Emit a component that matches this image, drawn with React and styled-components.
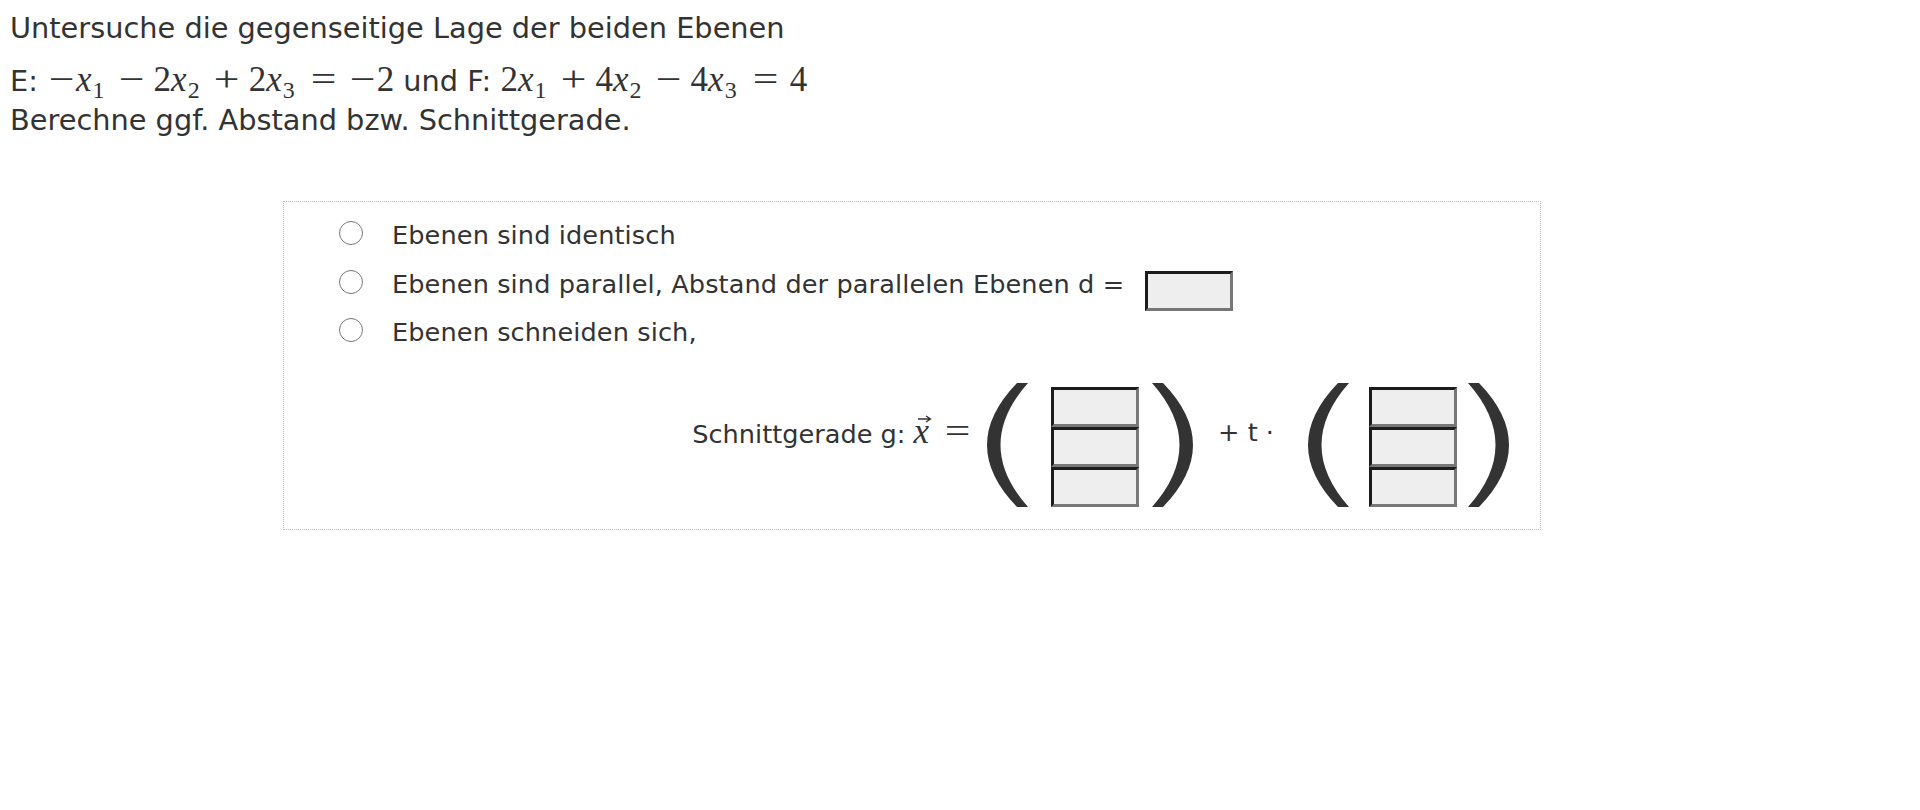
import React from "react";
import styled, { createGlobalStyle } from "styled-components";

const GlobalStyle = createGlobalStyle`
  body {
    margin: 0;
    background: #fff;
    color: #333;
    font-family: "DejaVu Sans", Verdana, sans-serif;
    font-size: 25.6px;
  }
`;

const Page = styled.div`
  padding: 8px 10px;
`;

const Intro = styled.p`
  margin: 0 0 12px;
  font-size: 28.8px;
  line-height: 40px;
`;

const Task = styled.p`
  margin: 0;
  font-size: 28.8px;
  line-height: 39px;
`;

const M = styled.span`
  font-family: "Liberation Serif", "Times New Roman", serif;
  font-size: 35px;
  font-style: ${(p) => (p.$it ? "italic" : "normal")};
  padding-right: ${(p) => (p.$it ? 2 : 0)}px;
`;

const Op = styled.span`
  display: inline-block;
  width: 29px;
  text-align: center;
  font-family: "Liberation Serif", "Times New Roman", serif;
  font-size: 35px;
  line-height: 1;
  margin: 0 ${(p) => (p.$unary ? 0 : p.$rel ? 10 : 8)}px;
  transform: scaleX(1.3);
`;

const Sub = styled.sub`
  font-family: "Liberation Serif", serif;
  font-size: 24px;
  font-style: normal;
  line-height: 0;
  vertical-align: -7px;
  margin-left: -1px;
  padding-right: 4px;
`;

const Box = styled.div`
  box-sizing: border-box;
  margin: 61px 0 0 273px;
  width: 1258px;
  height: 329px;
  border: 1px dotted #bbb;
  padding: 9px 29px 0 55px;
  letter-spacing: 0.1px;
`;

const Option = styled.label`
  display: flex;
  align-items: center;
  height: ${(p) => p.$h || 40}px;
`;

const Radio = styled.span`
  box-sizing: border-box;
  width: 24px;
  height: 24px;
  border: 1.6px solid #777;
  border-radius: 50%;
  margin-right: 29px;
  flex-shrink: 0;
  position: relative;
  top: -2px;
`;

const Field = styled.span`
  display: block;
  box-sizing: border-box;
  width: 88px;
  height: 40px;
  background: #eee;
  border: 3.5px solid;
  border-color: #1c1c1c #777 #777 #1c1c1c;
`;

const DField = styled(Field)`
  margin-left: 21px;
  margin-top: 14px;
`;

const Line = styled.div`
  display: flex;
  align-items: center;
  justify-content: flex-end;
  margin-top: 28px;
  letter-spacing: 0;
`;

const Label = styled.span`
  padding-bottom: 26px;
  margin: ${(p) => p.$m || "0"};
  white-space: nowrap;
`;

const Vec = styled.span`
  position: relative;
  display: inline-block;
  font-family: "Liberation Serif", serif;
  font-style: italic;
  font-size: 35px;
  padding-right: 4px;
  svg {
    position: absolute;
    left: 4px;
    top: 3px;
  }
`;

const Matrix = styled.div`
  display: flex;
  align-items: flex-end;
`;

const Stack = styled.div`
  display: flex;
  flex-direction: column;
  margin: ${(p) => p.$m};
`;

const Paren = ({ right }) => (
  <svg width="43" height="124" viewBox="0 0 43 124">
    <path
      d="M32 0 Q-28 62 32 124 L43 124 Q-12 62 43 0 Z"
      fill="#333"
      transform={right ? "translate(43 0) scale(-1 1)" : undefined}
    />
  </svg>
);

const Column = ({ m }) => (
  <Matrix>
    <Paren />
    <Stack $m={m}>
      <Field />
      <Field />
      <Field />
    </Stack>
    <Paren right />
  </Matrix>
);

const X = ({ n }) => (
  <>
    <M $it>x</M>
    <Sub>{n}</Sub>
  </>
);

export default function App() {
  return (
    <Page>
      <GlobalStyle />
      <Intro>Untersuche die gegenseitige Lage der beiden Ebenen</Intro>
      <Task>
        E: <Op $unary>−</Op>
        <X n="1" />
        <Op>−</Op>
        <M>2</M>
        <X n="2" />
        <Op>+</Op>
        <M>2</M>
        <X n="3" />
        <Op $rel>=</Op>
        <Op $unary>−</Op>
        <M>2</M> und F: <M>2</M>
        <X n="1" />
        <Op>+</Op>
        <M>4</M>
        <X n="2" />
        <Op>−</Op>
        <M>4</M>
        <X n="3" />
        <Op $rel>=</Op>
        <M>4</M>
        <br />
        Berechne ggf. Abstand bzw. Schnittgerade.
      </Task>
      <Box>
        <Option $h={48}>
          <Radio />
          Ebenen sind identisch
        </Option>
        <Option $h={50}>
          <Radio />
          Ebenen sind parallel, Abstand der parallelen Ebenen d =
          <DField />
        </Option>
        <Option $h={46}>
          <Radio />
          Ebenen schneiden sich,
        </Option>
        <Line>
          <Label $m="0 3px 0 0">
            Schnittgerade g:{" "}
            <Vec>
              x
              <svg width="14" height="8" viewBox="0 0 14 8">
                <path d="M0 4 H12 M8 1 L12.5 4 L8 7" stroke="#333" strokeWidth="1.4" fill="none" />
              </svg>
            </Vec>
            <Op $rel>=</Op>
          </Label>
          <Column m="0 13px 0 23px" />
          <Label $m="0 32px 0 23px">+ t ·</Label>
          <Column m="0 11px 0 20px" />
        </Line>
      </Box>
    </Page>
  );
}
